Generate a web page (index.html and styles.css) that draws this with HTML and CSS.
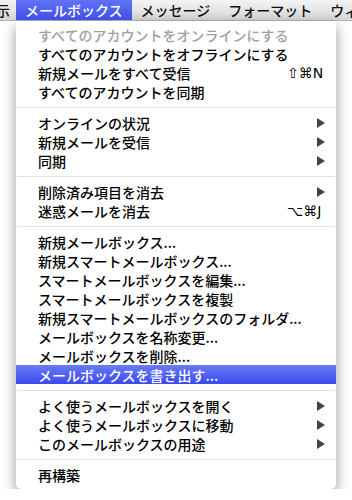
FILE: index.html
```html
<!DOCTYPE html>
<html lang="ja">
<head>
    <meta charset="UTF-8">
    <meta name="viewport" content="width=device-width, initial-scale=1.0">
    <title>メールボックス</title>
    <link rel="stylesheet" href="styles.css">
</head>
<body>

<div class="menubar">
    <span class="bar-item bar-cut">示</span>
    <span class="bar-item active">メールボックス</span>
    <span class="bar-item">メッセージ</span>
    <span class="bar-item">フォーマット</span>
    <span class="bar-item">ウィンドウ</span>
</div>

<div class="menu">
    <div class="menu-item disabled">すべてのアカウントをオンラインにする</div>
    <div class="menu-item">すべてのアカウントをオフラインにする</div>
    <div class="menu-item">新規メールをすべて受信<span class="shortcut">⇧⌘N</span></div>
    <div class="menu-item">すべてのアカウントを同期</div>
    <div class="separator"></div>
    <div class="menu-item">オンラインの状況<span class="arrow"></span></div>
    <div class="menu-item">新規メールを受信<span class="arrow"></span></div>
    <div class="menu-item">同期<span class="arrow"></span></div>
    <div class="separator"></div>
    <div class="menu-item">削除済み項目を消去<span class="arrow"></span></div>
    <div class="menu-item">迷惑メールを消去<span class="shortcut">⌥⌘J</span></div>
    <div class="separator"></div>
    <div class="menu-item">新規メールボックス...</div>
    <div class="menu-item">新規スマートメールボックス...</div>
    <div class="menu-item">スマートメールボックスを編集...</div>
    <div class="menu-item">スマートメールボックスを複製</div>
    <div class="menu-item">新規スマートメールボックスのフォルダ...</div>
    <div class="menu-item">メールボックスを名称変更...</div>
    <div class="menu-item">メールボックスを削除...</div>
    <div class="menu-item selected">メールボックスを書き出す...</div>
    <div class="separator"></div>
    <div class="menu-item">よく使うメールボックスを開く<span class="arrow"></span></div>
    <div class="menu-item">よく使うメールボックスに移動<span class="arrow"></span></div>
    <div class="menu-item">このメールボックスの用途<span class="arrow"></span></div>
    <div class="separator"></div>
    <div class="menu-item">再構築</div>
</div>

</body>
</html>
```

FILE: styles.css
```css
body {
    margin: 0;
    background-color: #fff;
    font-family: "Noto Sans CJK JP", "DejaVu Sans", sans-serif;
    font-size: 14px;
    font-weight: 500;
    color: #000;
    overflow: hidden;
}
.menubar {
    display: flex;
    height: 21px;
    background: linear-gradient(#f4f4f4, #d6d6d6);
    border-bottom: 1px solid #b5b5b5;
    box-sizing: border-box;
    white-space: nowrap;
    overflow: hidden;
}
.bar-item {
    padding: 0 9px;
    line-height: 20px;
    color: #111;
}
.bar-cut {
    margin-left: -4px;
    padding: 0 6px 0 0;
}
.bar-item.active {
    color: #fff;
    background: linear-gradient(#6373f4, #3d4fe9);
}
.menu {
    width: 320px;
    margin-left: 16px;
    padding: 4px 0 5px;
    background-color: #fff;
    border-radius: 0 0 5px 5px;
    box-shadow: 0 5px 14px rgba(0, 0, 0, 0.4);
}
.menu-item {
    display: flex;
    align-items: center;
    height: 19px;
    padding: 0 11px 0 22px;
    white-space: nowrap;
}
.menu-item.disabled {
    color: #a0a0a0;
}
.menu-item.selected {
    color: #fff;
    background: linear-gradient(#6a7af5, #3a4bee);
}
.shortcut {
    margin-left: auto;
    width: 38px;
    font-family: "DejaVu Sans", sans-serif;
    font-size: 14px;
    font-weight: normal;
}
.arrow {
    margin-left: auto;
    width: 0;
    height: 0;
    border-left: 8px solid #444;
    border-top: 5px solid transparent;
    border-bottom: 5px solid transparent;
}
.separator {
    height: 1px;
    margin: 6px 1px 5px;
    background-color: #e2e2e2;
}
```
